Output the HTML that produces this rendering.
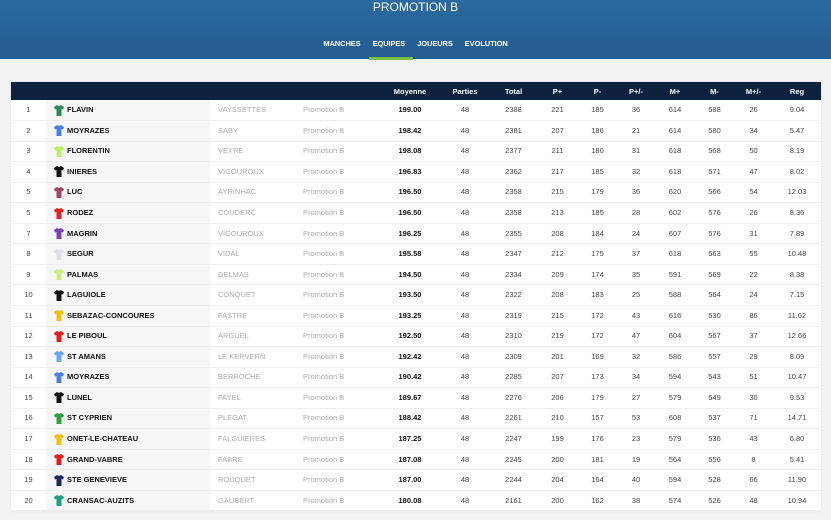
<!DOCTYPE html><html><head><meta charset="utf-8"><style>
*{margin:0;padding:0;box-sizing:border-box}
body{width:831px;height:520px;overflow:hidden;background:#f3f3f3;font-family:"Liberation Sans",sans-serif;position:relative}
.top{position:absolute;left:0;top:0;width:831px;height:59px;background:linear-gradient(#2a6aa0,#245c90)}
.title{position:absolute;top:0;width:831px;text-align:center;color:#fff;font-size:12px;line-height:14px}
.nav{position:absolute;top:39px;left:0;width:831px;text-align:center;color:#fff;font-size:7.5px;font-weight:bold;letter-spacing:-0.1px}
.nav span{margin:0 6px}
.ul{position:absolute;left:369px;top:57px;width:44px;height:3px;background:#7cc242}
.card{position:absolute;left:11px;top:82px;width:810px;height:429px;background:#fff;box-shadow:0 0 3px rgba(0,0,0,.08)}
table{border-collapse:collapse;width:810px;table-layout:fixed;font-size:7.5px}
th{background:#0e2240;color:#fff;height:18px;font-weight:bold;text-align:center}
td{height:20.55px;border-bottom:1px solid #eee;text-align:center;color:#444;line-height:10px;vertical-align:middle}
td.t{background:#f6f6f6;text-align:left;font-weight:bold;color:#111;padding-left:8px;white-space:nowrap}
td.t div{display:flex;align-items:center;height:10px}
td.c,td.d{text-align:left;color:#aaa;padding-left:8px}
td.m{font-weight:bold;color:#111}
svg{display:block;margin-right:3px;flex:none}
</style></head><body>
<div class="top"><div class="title">PROMOTION B</div><div class="nav"><span>MANCHES</span><span>EQUIPES</span><span>JOUEURS</span><span>EVOLUTION</span></div><div class="ul"></div></div>
<div class="card"><table>
<colgroup><col style="width:35px"><col style="width:164px"><col style="width:85px"><col style="width:85px"><col style="width:60px"><col style="width:50px"><col style="width:47px"><col style="width:41px"><col style="width:39px"><col style="width:38px"><col style="width:40px"><col style="width:39px"><col style="width:39px"><col style="width:48px"></colgroup>
<tr><th></th><th></th><th></th><th></th><th>Moyenne</th><th>Parties</th><th>Total</th><th>P+</th><th>P-</th><th>P+/-</th><th>M+</th><th>M-</th><th>M+/-</th><th>Reg</th></tr>
<tbody id="b"></tbody></table></div>
<script>
var d=[
[1,"FLAVIN","#2e8b57","VAYSSETTES","199.00",2388,221,185,36,614,588,26,"9.04"],
[2,"MOYRAZES","#4a80e0","SABY","198.42",2381,207,186,21,614,580,34,"5.47"],
[3,"FLORENTIN","#b8f060","VEYRE","198.08",2377,211,180,31,618,568,50,"8.19"],
[4,"INIERES","#111","VIGOUROUX","196.83",2362,217,185,32,618,571,47,"8.02"],
[5,"LUC","#a04560","AYRINHAC","196.50",2358,215,179,36,620,566,54,"12.03"],
[5,"RODEZ","#e02020","COUDERC","196.50",2358,213,185,28,602,576,26,"8.36"],
[7,"MAGRIN","#7a40b0","VIGOUROUX","196.25",2355,208,184,24,607,576,31,"7.89"],
[8,"SEGUR","#dde","VIDAL","195.58",2347,212,175,37,618,563,55,"10.48"],
[9,"PALMAS","#c8f080","DELMAS","194.50",2334,209,174,35,591,569,22,"8.38"],
[10,"LAGUIOLE","#111","CONQUET","193.50",2322,208,183,25,588,564,24,"7.15"],
[11,"SEBAZAC-CONCOURES","#f0c010","FASTRE","193.25",2319,215,172,43,616,530,86,"11.62"],
[12,"LE PIBOUL","#e02020","ARGUEL","192.50",2310,219,172,47,604,567,37,"12.66"],
[13,"ST AMANS","#6aa8e8","LE KERVERN","192.42",2309,201,169,32,586,557,29,"8.09"],
[14,"MOYRAZES","#4a80e0","BERROCHE","190.42",2285,207,173,34,594,543,51,"10.47"],
[15,"LUNEL","#111","FAYEL","189.67",2276,206,179,27,579,549,30,"9.53"],
[16,"ST CYPRIEN","#30a040","PLEGAT","188.42",2261,210,157,53,608,537,71,"14.71"],
[17,"ONET-LE-CHATEAU","#f0c010","FALGUIERES","187.25",2247,199,176,23,579,536,43,"6.80"],
[18,"GRAND-VABRE","#e02020","FABRE","187.08",2245,200,181,19,564,556,8,"5.41"],
[19,"STE GENEVIEVE","#1a2a60","ROUQUET","187.00",2244,204,164,40,594,528,66,"11.90"],
[20,"CRANSAC-AUZITS","#20a080","GAUBERT","180.08",2161,200,162,38,574,526,48,"10.94"]];
var h="";d.forEach(function(r){h+='<tr><td>'+r[0]+'</td><td class="t"><div><svg width="10" height="11" viewBox="0 0 10 11"><path d="M3 0L0 2L1 4.5L2.5 4V11H7.5V4L9 4.5L10 2L7 0Q5 1.5 3 0Z" fill="'+r[2]+'"/></svg>'+r[1]+'</div></td><td class="c">'+r[3]+'</td><td class="d">Promotion B</td><td class="m">'+r[4]+'</td><td>48</td><td>'+r[5]+'</td><td>'+r[6]+'</td><td>'+r[7]+'</td><td>'+r[8]+'</td><td>'+r[9]+'</td><td>'+r[10]+'</td><td>'+r[11]+'</td><td>'+r[12]+'</td></tr>'});
document.getElementById("b").innerHTML=h;
</script></body></html>
